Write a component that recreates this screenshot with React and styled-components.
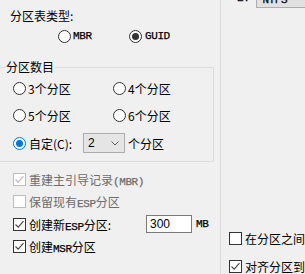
import React from 'react';
import styled, { createGlobalStyle } from 'styled-components';

const GlobalStyle = createGlobalStyle`
    html, body {
        margin: 0;
        padding: 0;
        background: #f0f0f0;
    }
    body {
        font-family: "Noto Sans CJK SC", "Liberation Sans", sans-serif;
        font-size: 12px;
        color: #000;
    }
`;

/* Window */
const Window = styled.div`
    display: flex;
    width: 305px;
    height: 274px;
    overflow: hidden;
    background: #f0f0f0;
`;

const LeftPane = styled.div`
    width: 220px;
    display: flex;
    flex-direction: column;
    padding-top: 8px;
    box-sizing: border-box;
    overflow: hidden;
`;

const Divider = styled.div`
    width: 1px;
    background: #dadada;
`;

const RightPane = styled.div`
    flex: 1;
    display: flex;
    flex-direction: column;
    padding-left: 8px;
`;

const Title = styled.div`
    margin-left: 10px;
    line-height: 16px;
    height: 16px;
`;

const RadioRow = styled.div`
    display: flex;
    margin: 4px 0 0 58px;
    height: 16px;
    align-items: center;
`;

const Option = styled.label`
    display: flex;
    align-items: center;
    gap: ${props => props.gap || 2}px;
    width: ${props => (props.width ? props.width + 'px' : 'auto')};
    height: 20px;
    color: ${props => (props.disabled ? '#6d6d6d' : '#000')};
    white-space: nowrap;
`;

const Radio = styled.span`
    position: relative;
    flex: none;
    width: 13px;
    height: 13px;
    box-sizing: border-box;
    border-radius: 50%;
    background: #fff;
    border: 1px solid ${props => props.color || '#333'};

    &::after {
        content: '';
        display: ${props => (props.checked ? 'block' : 'none')};
        position: absolute;
        left: 2px;
        top: 2px;
        width: 7px;
        height: 7px;
        border-radius: 50%;
        background: ${props => props.color || '#333'};
    }
`;

const Mono = styled.span`
    font-family: "Liberation Mono", "Noto Sans CJK SC", monospace;
    font-size: 11px;
    letter-spacing: -0.4px;
    -webkit-text-stroke: 0.25px currentColor;
`;

const Group = styled.fieldset`
    margin: 16px 0 0 -2px;
    width: 213px;
    box-sizing: border-box;
    padding: 4px 0 8px 0;
    border: 1px solid #dcdcdc;
`;

const Legend = styled.legend`
    margin-left: 6px;
    padding: 0 1px;
    line-height: 14px;
`;

const RadioGrid = styled.div`
    display: grid;
    grid-template-columns: 100px 100px;
    grid-auto-rows: 20px;
    row-gap: 7.5px;
    margin-left: 14px;
`;

const CustomRow = styled.div`
    grid-column: 1 / span 2;
    display: flex;
    align-items: center;
`;

const Combo = styled.div`
    display: flex;
    align-items: center;
    justify-content: space-between;
    width: 42px;
    height: 20px;
    box-sizing: border-box;
    margin: 0 3px 0 11px;
    padding: 0 5px 0 4px;
    background: #e5e5e5;
    border: 1px solid #adadad;
    font-family: "Liberation Sans", sans-serif;
`;

const Checks = styled.div`
    display: flex;
    flex-direction: column;
    gap: 2.5px;
    margin: 7px 0 0 13px;
`;

const Box = styled.span`
    flex: none;
    display: flex;
    align-items: center;
    justify-content: center;
    width: 13px;
    height: 13px;
    box-sizing: border-box;
    background: #fff;
    border: 1px solid ${props => (props.disabled ? '#bcbcbc' : '#333')};
    margin-right: 1px;
`;

const LabelText = styled.span`
    width: ${props => (props.width ? props.width + 'px' : 'auto')};
`;

const SizeInput = styled.div`
    width: 46px;
    height: 18px;
    box-sizing: border-box;
    border: 1px solid #7a7a7a;
    background: #fff;
    padding-left: 3px;
    line-height: 16px;
    font-family: "Liberation Sans", sans-serif;
    margin-right: 2px;
`;

const DriveRow = styled.div`
    display: flex;
    align-items: center;
    margin: -12px 0 0 8px;
    height: 20px;
`;

const DriveCombo = styled.div`
    flex: 1;
    height: 20px;
    margin-left: 7px;
    box-sizing: border-box;
    padding-left: 5px;
    background: #e1e1e1;
    border: 1px solid #adadad;
    border-right: none;
    line-height: 18px;
`;

const BottomChecks = styled.div`
    margin-top: auto;
    display: flex;
    flex-direction: column;
    gap: 8px;
    margin-bottom: -2px;
`;

const Chevron = () => (
    <svg width="8" height="5" viewBox="0 0 8 5">
        <path d="M0.5 0.5 L4 4 L7.5 0.5" fill="none" stroke="#606060" strokeWidth="1" />
    </svg>
);

const Tick = ({ color }) => (
    <svg width="11" height="11" viewBox="0 0 11 11">
        <path d="M1.5 5.5 L4.2 8.2 L9.5 2.2" fill="none" stroke={color} strokeWidth="1.1" />
    </svg>
);

const CheckBox = ({ checked, disabled }) => (
    <Box disabled={disabled}>
        {checked ? <Tick color={disabled ? '#bcbcbc' : '#444'} /> : null}
    </Box>
);

export default function App() {
    return (
        <Window>
            <GlobalStyle />
            <LeftPane>
                <Title>分区表类型:</Title>
                <RadioRow>
                    <Option width={71} gap={2}>
                        <Radio />
                        <Mono>MBR</Mono>
                    </Option>
                    <Option gap={3}>
                        <Radio checked />
                        <Mono>GUID</Mono>
                    </Option>
                </RadioRow>

                <Group>
                    <Legend>分区数目</Legend>
                    <RadioGrid>
                        <Option><Radio /><LabelText>3个分区</LabelText></Option>
                        <Option><Radio /><LabelText>4个分区</LabelText></Option>
                        <Option><Radio /><LabelText>5个分区</LabelText></Option>
                        <Option><Radio /><LabelText>6个分区</LabelText></Option>
                        <CustomRow>
                            <Option gap={3}>
                                <Radio checked color="#0078d7" />
                                <LabelText>自定(C):</LabelText>
                            </Option>
                            <Combo>
                                2
                                <Chevron />
                            </Combo>
                            个分区
                        </CustomRow>
                    </RadioGrid>
                </Group>

                <Checks>
                    <Option disabled>
                        <CheckBox checked disabled />
                        <LabelText>重建主引导记录<Mono>(MBR)</Mono></LabelText>
                    </Option>
                    <Option disabled>
                        <CheckBox disabled />
                        <LabelText>保留现有<Mono>ESP</Mono>分区</LabelText>
                    </Option>
                    <Option>
                        <CheckBox checked />
                        <LabelText width={115}>创建新<Mono>ESP</Mono>分区:</LabelText>
                        <SizeInput>300</SizeInput>
                        <Mono>MB</Mono>
                    </Option>
                    <Option>
                        <CheckBox checked />
                        <LabelText>创建<Mono>MSR</Mono>分区</LabelText>
                    </Option>
                </Checks>
            </LeftPane>
            <Divider />
            <RightPane>
                <DriveRow>
                    <Mono>E:</Mono>
                    <DriveCombo><Mono>NTFS</Mono></DriveCombo>
                </DriveRow>
                <BottomChecks>
                    <Option>
                        <CheckBox />
                        <LabelText>在分区之间</LabelText>
                    </Option>
                    <Option>
                        <CheckBox checked />
                        <LabelText>对齐分区到</LabelText>
                    </Option>
                </BottomChecks>
            </RightPane>
        </Window>
    );
}
